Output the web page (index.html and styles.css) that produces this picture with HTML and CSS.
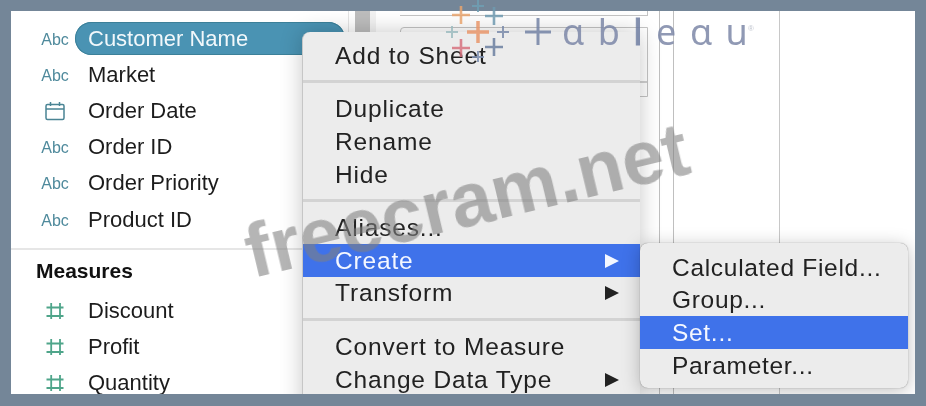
FILE: index.html
```html
<!DOCTYPE html>
<html lang="en">
<head>
    <meta charset="UTF-8">
    <title>Tableau field menu</title>
    <link rel="stylesheet" href="styles.css">
</head>
<body>
    <div class="frame">
        <div class="fields">
            <div class="row">
                <span class="type">Abc</span>
                <span class="name selected">Customer Name</span>
            </div>
            <div class="row">
                <span class="type">Abc</span>
                <span class="name">Market</span>
            </div>
            <div class="row">
                <span class="type">
                    <svg class="field-icon" width="20" height="20" viewBox="0 0 20 20" fill="none" stroke="#4a8494" stroke-width="1.5">
                        <rect x="1" y="3.500" width="18" height="15" rx="1.500"/>
                        <path d="M1 8h18M5.500 1v4M14.500 1v4"/>
                    </svg>
                </span>
                <span class="name">Order Date</span>
            </div>
            <div class="row">
                <span class="type">Abc</span>
                <span class="name">Order ID</span>
            </div>
            <div class="row">
                <span class="type">Abc</span>
                <span class="name">Order Priority</span>
            </div>
            <div class="row">
                <span class="type">Abc</span>
                <span class="name">Product ID</span>
            </div>
            <div class="divider"></div>
            <div class="heading">Measures</div>
            <div class="row">
                <span class="type">
                    <svg class="field-icon hash" width="18" height="18" viewBox="0 0 18 18"><path d="M5.200 1v16M14 1v16M0.500 5.500h17M0.500 14h17"/></svg>
                </span>
                <span class="name">Discount</span>
            </div>
            <div class="row">
                <span class="type">
                    <svg class="field-icon hash" width="18" height="18" viewBox="0 0 18 18"><path d="M5.200 1v16M14 1v16M0.500 5.500h17M0.500 14h17"/></svg>
                </span>
                <span class="name">Profit</span>
            </div>
            <div class="row">
                <span class="type">
                    <svg class="field-icon hash" width="18" height="18" viewBox="0 0 18 18"><path d="M5.200 1v16M14 1v16M0.500 5.500h17M0.500 14h17"/></svg>
                </span>
                <span class="name">Quantity</span>
            </div>
        </div>

        <div class="canvas">
            <div class="gutter">
                <div class="scroll-track"></div>
            </div>
            <div class="sheets">
                <div class="sheet-top"></div>
                <div class="sheet-box"><div class="sheet-rule"></div></div>
            </div>
            <div class="shelf"></div>
            <div class="shelf-wide"></div>
        </div>

        <div class="menu">
            <div class="item">Add to Sheet</div>
            <div class="sep"></div>
            <div class="item">Duplicate</div>
            <div class="item">Rename</div>
            <div class="item">Hide</div>
            <div class="sep"></div>
            <div class="item">Aliases...</div>
            <div class="item active">Create<span class="arrow"></span></div>
            <div class="item">Transform<span class="arrow"></span></div>
            <div class="sep"></div>
            <div class="item">Convert to Measure</div>
            <div class="item">Change Data Type<span class="arrow"></span></div>
        </div>

        <div class="submenu">
            <div class="item">Calculated Field...</div>
            <div class="item">Group...</div>
            <div class="item active">Set...</div>
            <div class="item">Parameter...</div>
        </div>
    </div>

    <div class="logo">
        <svg class="logo-mark" width="120" height="70" viewBox="0 0 120 70" fill="none">
            <path d="M25 14v18M16 23h18" stroke="#e8a46e" stroke-width="2.600"/>
            <path d="M42 8v12M36 14h12" stroke="#6f9fb4" stroke-width="2"/>
            <path d="M58 15v18M49 24h18" stroke="#6f9ab0" stroke-width="2.600"/>
            <path d="M16 34v12M10 40h12" stroke="#9dbcc0" stroke-width="2"/>
            <path d="M42 29v22M31 40h22" stroke="#e9966a" stroke-width="3.500"/>
            <path d="M67 34v12M61 40h12" stroke="#7b8bab" stroke-width="2"/>
            <path d="M25 47v18M16 56h18" stroke="#d8737f" stroke-width="2.600"/>
            <path d="M42 59v12M36 65h12" stroke="#7d8fb0" stroke-width="2"/>
            <path d="M58 46v18M49 55h18" stroke="#6b7fa0" stroke-width="2.600"/>
            <path d="M102 26v27M89 40h26" stroke="#7483a5" stroke-width="3"/>
        </svg>
        <span class="logo-word">ɑb<span class="logo-l">l</span>eɑ<span class="logo-u">u</span></span>
        <span class="logo-reg">®</span>
    </div>

    <div class="watermark">freecram.net</div>
</body>
</html>
```

FILE: styles.css
```css
body {
    margin: 0;
    width: 926px;
    height: 406px;
    position: relative;
    overflow: hidden;
    background-color: #748698;
    font-family: "Liberation Sans", Arial, sans-serif;
    color: #1c1c1c;
}
.frame {
    position: absolute;
    left: 11px;
    top: 11px;
    width: 904px;
    height: 383px;
    background-color: white;
    overflow: hidden;
    display: flex;
    filter: blur(0.5px);
}

/* data pane */
.fields {
    width: 337px;
    flex: none;
    box-sizing: border-box;
    padding: 9px 3px 0 0;
}
.row {
    display: flex;
    align-items: center;
    height: 36.2px;
    padding-left: 30px;
}
.type {
    width: 28px;
    display: flex;
    justify-content: center;
    padding-top: 3px;
    font-size: 16px;
    color: #4f8a9c;
}
.field-icon {
    margin-top: -2px;
}
.hash {
    fill: none;
    stroke: #4fa58a;
    stroke-width: 1.8;
}
.name {
    flex: 1;
    margin-left: 6px;
    padding-left: 13px;
    height: 33px;
    line-height: 33px;
    font-size: 22px;
}
.selected {
    background-color: #4a93b3;
    color: #f2f8fb;
    border-radius: 17px;
    box-shadow: inset 0 0 0 1px #3c8099;
}
.divider {
    height: 2px;
    margin-top: 11px;
    background-color: #e6e6e6;
}
.heading {
    height: 42px;
    line-height: 41px;
    padding-left: 25px;
    font-size: 21px;
    font-weight: bold;
    color: #111;
}

/* sheet area behind the menus */
.canvas {
    flex: 1;
    display: flex;
}
.gutter {
    width: 52px;
    flex: none;
    box-sizing: border-box;
    padding-left: 6px;
    border-left: 1px solid #e4e4e4;
}
.scroll-track {
    width: 15px;
    height: 100%;
    background-color: #bdbdbd;
    border-right: 6px solid #f2f2f2;
}
.sheets {
    width: 248px;
    flex: none;
}
.sheet-top {
    height: 4px;
    border-right: 1px solid #c4c4c4;
    border-bottom: 1px solid #c4c4c4;
}
.sheet-box {
    height: 70px;
    margin-top: 11px;
    border: 1px solid #c4c4c4;
    border-radius: 4px 0 0 0;
    box-sizing: border-box;
    padding-top: 53px;
}
.sheet-rule {
    height: 2px;
    background-color: #d0d0d0;
}
.shelf {
    width: 13px;
    flex: none;
    margin-left: 11px;
    border-left: 1px solid #bfbfbf;
    border-right: 1px solid #bfbfbf;
}
.shelf-wide {
    width: 105px;
    flex: none;
    border-right: 1px solid #c8c8c8;
}

/* context menus */
.menu {
    position: absolute;
    left: 291px;
    top: 21px;
    width: 338px;
    height: 400px;
    box-sizing: border-box;
    padding-top: 7px;
    background-color: #ececec;
    border-left: 1px solid #c6c6c6;
    border-radius: 8px 8px 0 0;
    box-shadow: 0 0 22px rgba(0,0,0,0.22);
}
.submenu {
    position: absolute;
    left: 629px;
    top: 232px;
    width: 268px;
    height: 145px;
    box-sizing: border-box;
    padding-top: 8px;
    background-color: #ececec;
    border-radius: 8px;
    box-shadow: 0 0 1px rgba(0,0,0,0.5), 0 3px 18px rgba(0,0,0,0.25);
}
.item {
    height: 32.6px;
    box-sizing: border-box;
    padding: 1px 21px 0 32px;
    font-size: 24.5px;
    letter-spacing: 0.83px;
    color: #222;
    display: flex;
    align-items: center;
    justify-content: space-between;
}
.submenu .item {
    letter-spacing: 0.7px;
}
.active {
    background-color: #3f72ea;
    color: #f4f7ff;
}
.sep {
    height: 3px;
    margin: 8.5px 0 9.5px;
    background-color: #d3d3d3;
}
.arrow {
    width: 0;
    height: 0;
    border-left: 14px solid #222;
    border-top: 7px solid transparent;
    border-bottom: 7px solid transparent;
}
.active .arrow {
    border-left-color: #f4f7ff;
}

/* overlays */
.logo {
    position: absolute;
    left: 436px;
    top: -8px;
    height: 70px;
    display: flex;
    filter: blur(0.5px);
    opacity: 0.85;
}
.logo-word {
    position: absolute;
    left: 126px;
    top: 15px;
    font-family: "Noto Sans", "DejaVu Sans", sans-serif;
    font-size: 36px;
    line-height: 50px;
    letter-spacing: 13.5px;
    color: #7d88a8;
    white-space: nowrap;
}
.logo-l {
    -webkit-text-stroke: 1px #6f7ea2;
    color: #6f7ea2;
}
.logo-u {
    letter-spacing: 0;
}
.logo-reg {
    position: absolute;
    left: 312px;
    top: 32px;
    font-size: 8px;
    color: #b5bac6;
}
.watermark {
    position: absolute;
    left: 240px;
    top: 155px;
    font-size: 75.5px;
    font-weight: bold;
    line-height: 90px;
    white-space: nowrap;
    color: rgba(128,128,128,0.58);
    transform: rotate(-13.5deg);
    filter: blur(0.5px);
}
```
